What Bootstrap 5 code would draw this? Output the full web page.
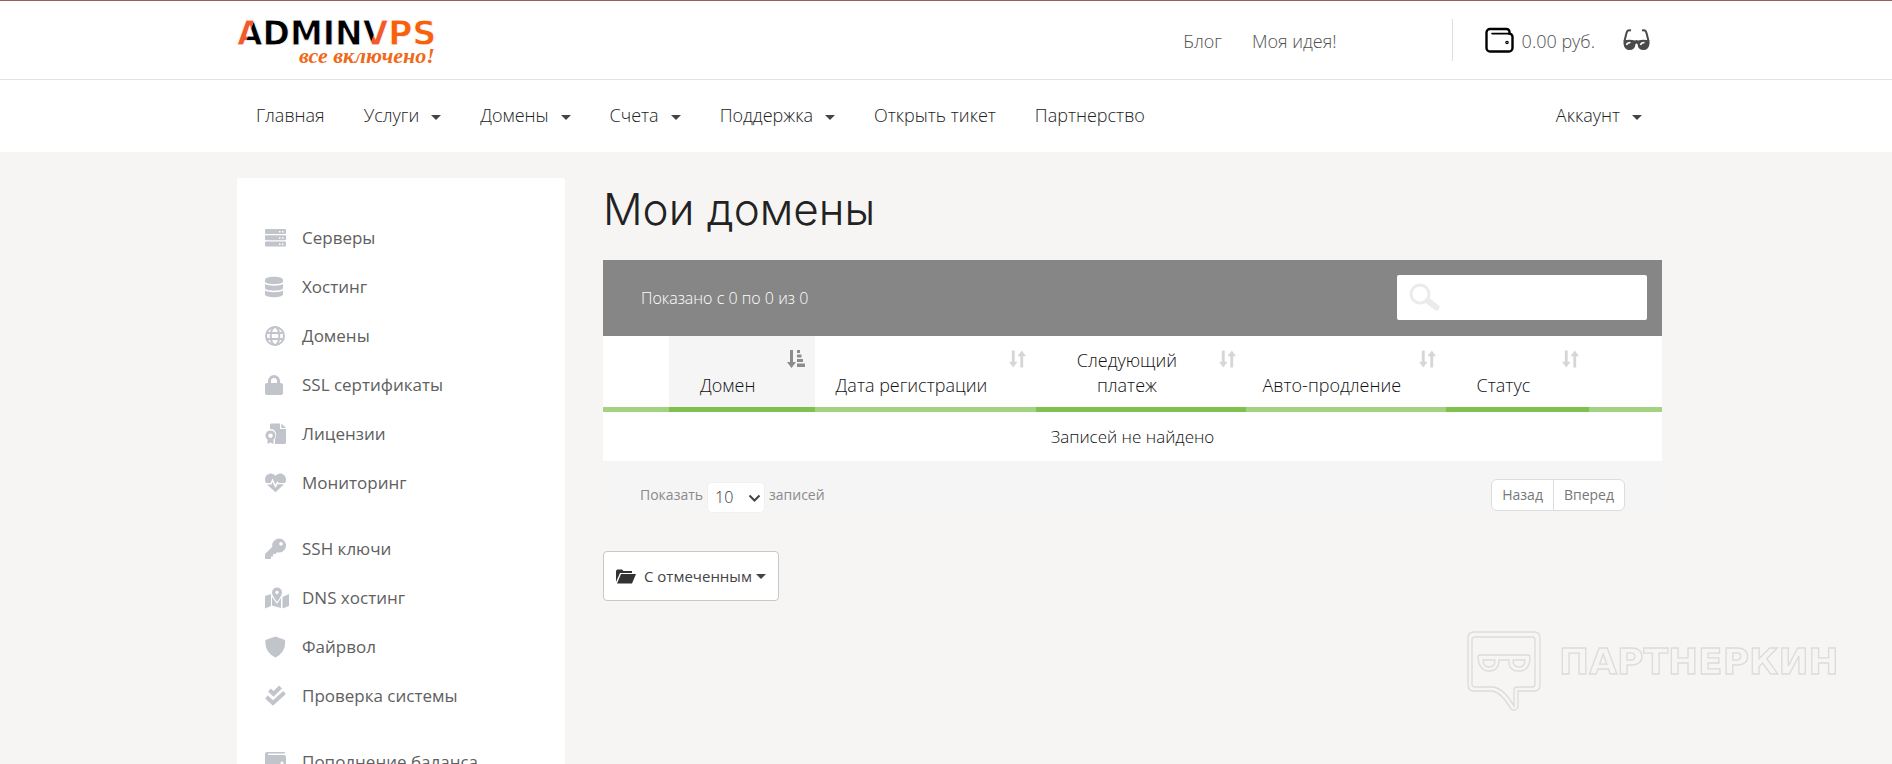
<!DOCTYPE html>
<html lang="ru">
<head>
<meta charset="utf-8">
<meta name="viewport" content="width=device-width, initial-scale=1">
<title>Мои домены</title>
<link href="https://cdn.jsdelivr.net/npm/bootstrap@5.3.0/dist/css/bootstrap.min.css" rel="stylesheet">
<style>
body{font-family:"Open Sans","Noto Sans",sans-serif;font-size:16px;color:#333;background:#f6f5f4;border-top:1px solid #a05a5e}
a{text-decoration:none;color:inherit}
.wrap{max-width:1432px;margin:0 auto;padding-left:7px}
.topbar{border-bottom:1px solid #e2e2e2}
.topbar .wrap{height:78px;font-size:18px;color:#505050;font-weight:300}
.toplinks,.balance{padding-top:3px}
.brand{width:202px}
.brand svg{display:block}
.toplinks{gap:30px;margin-right:115px}
.vline{width:1px;height:42px;background:#ddd;margin-right:32px}
.glasses{margin-right:12px}
.mainnav .nav-link{padding:21px 20px 23px 19px;font-size:18px;line-height:28px;color:#222;font-weight:300}
.mainnav .dropdown-toggle::after,.marked::after{border-top:5px solid #444;border-left:5px solid transparent;border-right:5px solid transparent;margin-left:12px;vertical-align:2px}
.page{padding-top:26px}
.side{width:328px;padding:35px 28px 40px;border-radius:3px;margin-right:38px;font-size:17px;color:#606060;flex:none}
.side a{display:flex;align-items:center;height:49px;line-height:24px}
.side .list-unstyled{margin:0 0 17px}
.side svg{width:24px;height:22px;margin-right:13px;fill:#c1c4cb;flex:none}
h1{font-family:Inter,sans-serif;font-weight:300;font-size:44px;line-height:52px;color:#222;margin:5px 0 25px}
.toolbar{background:#868686;color:#fff;height:76px;padding:0 15px 0 38px;font-weight:300}
.search{width:250px;height:45px;border:0;border-radius:2px;padding:0 12px 0 50px}
.searchbox{margin-bottom:2px}
.searchbox svg{position:absolute;left:12px;top:8px}
.grid{table-layout:fixed;width:100%;background:#fff}
.grid th{height:73px;font-weight:300;font-size:18px;line-height:25px;text-align:center;vertical-align:bottom;padding:0 28px 9px 0;border-bottom:5px solid #a3d280;position:relative;color:#111}
.grid th.dark{border-bottom-color:#80c04e}
.grid th.active{background:#f5f5f5}
.grid td{height:52px;text-align:center;font-size:17px;font-weight:300;color:#111}
.grid th svg{position:absolute;right:10px;top:14px}
.foot{height:59px;padding:8px 37px 0;background:#f5f5f5;font-size:14px;color:#8a8a8a}
.foot select{width:58px;height:31px;border:1px solid #f0f0f0;border-radius:5px;background:#fff;color:#333;font-size:16px;font-weight:300;padding:0 20px 0 7px;appearance:none}
.selbox{margin:5px 4px 0}
.selbox svg{position:absolute;right:4px;top:12px;pointer-events:none}
.pager button{height:32px;font-size:14px;line-height:20px;padding:0 10px;border:1px solid #ddd;background:#fff;color:#777}
.marked{height:50px;width:176px;margin-top:31px;background:#fff;border:1px solid #c8c8c8;border-radius:4px;font-size:15px;color:#444;padding:0 12px}
.marked::after{margin-left:4px}
.watermark{position:fixed;right:49px;bottom:51px;pointer-events:none}
</style>
</head>
<body class="vh-100 overflow-hidden">
<svg class="d-none">
  <symbol id="sort" viewBox="0 0 18 18"><path d="M3 0h3v12h3l-4.500 6L0 12h3zM12 18h3V6h3L13.500 0 9 6h3z"/></symbol>
</svg>

<header class="topbar bg-white">
  <div class="wrap d-flex align-items-center">
    <a class="brand me-auto" href="#" aria-label="AdminVPS">
      <svg width="204" height="54" viewBox="0 0 204 54">
        <defs>
          <linearGradient id="ga" gradientUnits="userSpaceOnUse" x1="13" y1="18" x2="13.500" y2="18.200"><stop offset="0" stop-color="#f05a2c"/><stop offset="1" stop-color="#000"/></linearGradient>
          <linearGradient id="gv" gradientUnits="userSpaceOnUse" x1="138" y1="18" x2="138.500" y2="18.200"><stop offset="0" stop-color="#000"/><stop offset="1" stop-color="#f05a2c"/></linearGradient>
        </defs>
        <text x="0" y="32" font-family="DejaVu Sans" font-weight="700" font-size="33" stroke="#fff" stroke-width=".8"><tspan fill="url(#ga)">A</tspan><tspan>DMIN</tspan><tspan fill="url(#gv)">V</tspan><tspan fill="#f8600f">PS</tspan></text>
        <text x="62" y="50" font-family="Liberation Serif" font-style="italic" font-weight="700" font-size="22" fill="#ee6a1a">все включено!</text>
      </svg>
    </a>
    <nav class="toplinks d-flex"><a href="#">Блог</a><a href="#">Моя идея!</a></nav>
    <div class="vline"></div>
    <a href="#" class="d-flex align-items-center me-4">
      <svg class="me-2" width="29" height="27" viewBox="0 0 29 27" fill="none" stroke="#000" stroke-width="2.400" stroke-linecap="round" stroke-linejoin="round"><path d="M24.500 6V5a3 3 0 0 0-3-3H5a3.500 3.500 0 0 0-3.500 3.500V21A3.500 3.500 0 0 0 5 24.500h19a3.500 3.500 0 0 0 3.500-3.500V9.500A3.500 3.500 0 0 0 24 6.600"/><path d="M7 6.600h17" stroke-width="1.600"/><circle cx="22" cy="15.500" r=".6"/></svg>
      <span class="balance">0.00 руб.</span>
    </a>
    <button class="btn p-0 border-0 ms-1 glasses" aria-label="Версия для слабовидящих">
      <svg class="d-block" width="27" height="22" viewBox="0 0 27 22"><path d="M8 1.500C5 .5 4 2 3.500 4L1.500 12M19 1.500c3-1 4 .5 4.500 2.500l2 8" fill="none" stroke="#4a4a4a" stroke-width="2"/><path d="M.5 11.500q6-1.500 11.500 0 1.500-.8 3 0 5.500-1.500 11.500 0v3.500q-1 6-6 6-5.500 0-6-6-1-1.200-2 0-.5 6-6 6-5 0-6-6z" fill="#4a4a4a"/><path d="M3.500 16q.5-2.500 4-2.500M17.500 16q.5-2.500 4-2.500" stroke="#fff" stroke-width="1.500" fill="none"/></svg>
    </button>
  </div>
</header>

<div class="mainnav bg-white">
  <nav class="wrap nav">
    <a class="nav-link" href="#">Главная</a>
    <a class="nav-link dropdown-toggle" href="#">Услуги</a>
    <a class="nav-link dropdown-toggle" href="#">Домены</a>
    <a class="nav-link dropdown-toggle" href="#">Счета</a>
    <a class="nav-link dropdown-toggle" href="#">Поддержка</a>
    <a class="nav-link" href="#">Открыть тикет</a>
    <a class="nav-link" href="#">Партнерство</a>
    <a class="nav-link dropdown-toggle ms-auto" href="#">Аккаунт</a>
  </nav>
</div>

<div class="wrap page d-flex align-items-start">
  <aside class="side bg-white">
    <ul class="list-unstyled">
      <li><a href="#"><svg viewBox="0 0 24 22"><path fill-rule="evenodd" d="M1 2h19q1 0 1 1v3q0 1-1 1H1Q0 7 0 6V3q0-1 1-1zm13 2v1.500h1.500V4zm3 0v1.500h1.500V4zM1 8.200h19q1 0 1 1v3q0 1-1 1H1q-1 0-1-1v-3q0-1 1-1zm13 2v1.500h1.500v-1.500zm3 0v1.500h1.500v-1.500zM1 14.400h19q1 0 1 1v3q0 1-1 1H1q-1 0-1-1v-3q0-1 1-1zm13 2v1.500h1.500v-1.500zm3 0v1.500h1.500v-1.500z"/></svg>Серверы</a></li>
      <li><a href="#"><svg viewBox="0 0 24 22"><path d="M0 4C0-.3 18-.3 18 4v1.500c0 3.500-18 3.500-18 0zM0 8c3 2.200 15 2.200 18 0v4c0 3.500-18 3.500-18 0zM0 14.500c3 2.200 15 2.200 18 0V18c0 4.300-18 4.300-18 0z"/></svg>Хостинг</a></li>
      <li><a href="#"><svg viewBox="0 0 24 22"><g fill="none" stroke="#c1c4cb" stroke-width="2"><circle cx="10" cy="11" r="9"/><ellipse cx="10" cy="11" rx="4.300" ry="9"/><path d="M1 8h18M1 14h18"/></g></svg>Домены</a></li>
      <li><a href="#"><svg viewBox="0 0 24 22"><path fill-rule="evenodd" d="M3 9V7a6 6 0 0 1 12 0v2h1q2 0 2 2v8q0 2-2 2H2q-2 0-2-2v-8q0-2 2-2zm3 0h6V7a3 3 0 0 0-6 0z"/></svg>SSL сертификаты</a></li>
      <li><a href="#"><svg viewBox="0 0 24 22"><path d="M6 .5h9V6h6v13.500q0 1.500-1.500 1.500H10v-5q3-5-1-9Q8 6 5 6V2q0-1.500 1-1.500zM16.300.5 21 5h-4.700z"/><path fill-rule="evenodd" d="M5.500 7.500A5 5 0 0 1 8.500 16.500V21l-3-1.500-3 1.500v-4.500a5 5 0 0 1 3-9zm0 3a2.200 2.200 0 1 0 .01 0z"/></svg>Лицензии</a></li>
      <li><a href="#"><svg viewBox="0 0 24 22"><path d="M10.500 4C8-.5 0 1 0 7.500q0 2 1 3.500h4.500l2-4.500 3 6 2-3.500 1 2H20q1-1.500 1-3.500C21 1 13-.5 10.500 4z"/><path d="M2 12.400h4.500l1-2.300 3 6 2-3.800h6.500l-8.500 8z"/></svg>Мониторинг</a></li>
    </ul>
    <ul class="list-unstyled">
      <li><a href="#"><svg viewBox="0 0 24 22"><path fill-rule="evenodd" d="M14 .5a7 7 0 1 1-2 13.700L10.500 16H8v2.500H6V21H1q-1 0-1-1v-4l7.300-7.300A7 7 0 0 1 14 .5zM16 4a1.800 1.800 0 1 0 .01 0z"/></svg>SSH ключи</a></li>
      <li><a href="#"><svg viewBox="0 0 24 22"><path fill-rule="evenodd" d="M12 .5A5 5 0 0 1 17 5.500q0 3-5 9.500-5-6.500-5-9.500A5 5 0 0 1 12 .5zm0 3.300a1.700 1.700 0 1 0 .01 0zM0 9l6-2v12l-6 2.500zM7 10l5 7 4-6v10l-9-2.500zM17.500 10 24 7v12l-6.500 2.500z"/></svg>DNS хостинг</a></li>
      <li><a href="#"><svg viewBox="0 0 24 22"><path d="m10.500.5 9.500 3.500q1.500 12-9.500 17.500Q-1 16 .5 4z"/></svg>Файрвол</a></li>
      <li><a href="#"><svg viewBox="0 0 24 22"><path d="m4.500 5 4 4 7-7M1.500 12 8 18 19.500 7.500" fill="none" stroke="#c1c4cb" stroke-width="4"/></svg>Проверка системы</a></li>
    </ul>
    <ul class="list-unstyled">
      <li><a href="#"><svg viewBox="0 0 24 22"><path fill-rule="evenodd" d="M2 1h17q1.500 0 1.500 1.500H3V4h16q2 0 2 2v12q0 2-2 2H2q-2 0-2-2V3q0-2 2-2zm15 9.500a1.500 1.500 0 1 0 .01 0z"/></svg>Пополнение баланса</a></li>
    </ul>
  </aside>

  <main class="flex-grow-1">
    <h1>Мои домены</h1>
    <div class="toolbar d-flex align-items-center justify-content-between">
      <div>Показано с 0 по 0 из 0</div>
      <div class="searchbox position-relative">
        <input class="search d-block" type="search" aria-label="Поиск">
        <svg width="32" height="30" viewBox="0 0 32 30" fill="none" stroke="#ebebed" stroke-linecap="round"><circle cx="11" cy="11" r="9" stroke-width="3"/><path d="m19 18 8.500 6.500" stroke-width="6"/></svg>
      </div>
    </div>
    <table class="grid">
      <colgroup><col style="width:6.200%"><col style="width:13.800%"><col style="width:20.900%"><col style="width:19.800%"><col style="width:18.900%"><col style="width:13.500%"><col style="width:6.900%"></colgroup>
      <thead><tr>
        <th></th>
        <th class="dark active">Домен<svg width="18" height="18" viewBox="0 0 18 18" fill="#8c8c8c"><path d="M3 0h3v12h3l-4.500 6L0 12h3zM10 0h3v3h-3zM10 4.500h4.500v3H10zM10 9h6v3h-6zM10 13.500h8V17h-8z"/></svg></th>
        <th>Дата регистрации<svg width="17" height="18" fill="#d6d6d6"><use href="#sort"/></svg></th>
        <th class="dark">Следующий<br>платеж<svg width="17" height="18" fill="#d6d6d6"><use href="#sort"/></svg></th>
        <th>Авто-продление<svg width="17" height="18" fill="#d6d6d6"><use href="#sort"/></svg></th>
        <th class="dark">Статус<svg width="17" height="18" fill="#d6d6d6"><use href="#sort"/></svg></th>
        <th></th>
      </tr></thead>
      <tbody><tr><td colspan="7">Записей не найдено</td></tr></tbody>
    </table>
    <div class="foot d-flex align-items-center">
      <label for="len">Показать</label>
      <div class="selbox position-relative">
        <select id="len" class="d-block"><option>10</option><option>25</option></select>
        <svg width="13" height="9" viewBox="0 0 13 9" fill="none" stroke="#444" stroke-width="2"><path d="m1.500 1.500 5 5 5-5"/></svg>
      </div>
      <span>записей</span>
      <div class="btn-group pager ms-auto"><button class="btn">Назад</button><button class="btn">Вперед</button></div>
    </div>
    <button class="btn marked dropdown-toggle d-flex align-items-center">
      <svg class="me-2" width="20" height="15" viewBox="0 0 20 15" fill="#333"><path d="M0 13V2l1-1.500h5L7.500 2H16v2H4zM5 5h15l-4 9.500H1z"/></svg>С отмеченным
    </button>
  </main>
</div>

<div class="watermark">
  <svg width="376" height="82" viewBox="0 0 376 82" fill="none" stroke="#dcdbda" stroke-width="1.300">
    <path d="M7 1h60q6 0 6 6v47q0 6-6 6H51v16q-2 5-7 2Q34 61 25 60H7q-6 0-6-6V7q0-6 6-6z"/>
    <path d="M8 6h57q3 0 3 3v44q0 3-3 3H50q-3 0-3 3v16Q36 56 25 56H8q-3 0-3-3V9q0-3 3-3z"/>
    <path d="M13 24h48q2 0 2 2 0 14-11 14T42 29H32q0 11-10 11T11 26q0-2 2-2zM16 29h12q0 7-6 7t-6-7zM46 29h12q0 7-6 7t-6-7z"/>
    <text x="92" y="43" font-family="DejaVu Sans" font-weight="700" font-size="36">ПАРТНЕРКИН</text>
  </svg>
</div>
<script src="https://cdn.jsdelivr.net/npm/bootstrap@5.3.0/dist/js/bootstrap.bundle.min.js"></script>
</body>
</html>
